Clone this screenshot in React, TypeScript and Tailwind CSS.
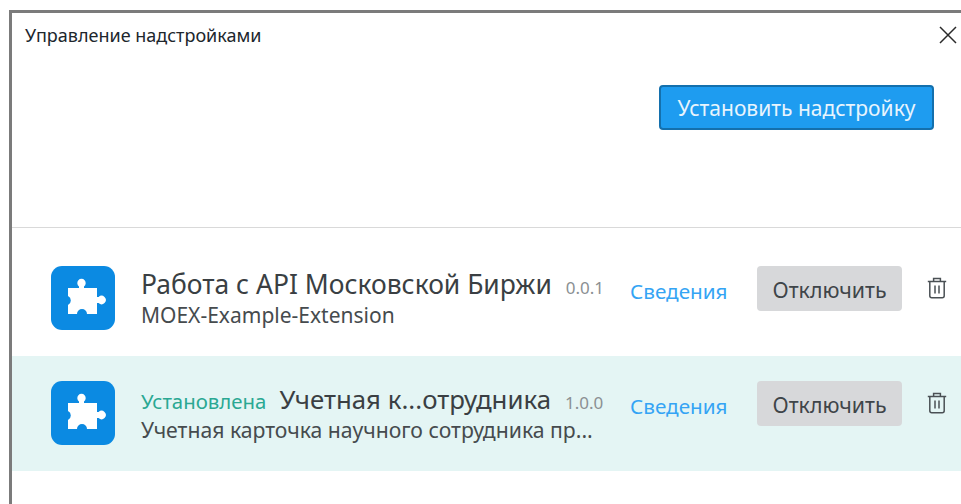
const font = "font-['Noto_Sans','Open_Sans',sans-serif]"

type Addon = { title: string; titleSize: string; version: string; subtitle: string; subtitleSize: string; installed?: boolean }

const addons: Addon[] = [
  { title: 'Работа с API Московской Биржи', titleSize: 'text-[26.45px]', version: '0.0.1', subtitle: 'MOEX-Example-Extension', subtitleSize: 'text-[21px]' },
  { title: 'Учетная к...отрудника', titleSize: 'text-[25.8px]', version: '1.0.0', subtitle: 'Учетная карточка научного сотрудника пр...', subtitleSize: 'text-[21.2px]', installed: true },
]

function PuzzleIcon() {
  return (
    <svg className="shrink-0" width="64" height="64" viewBox="0 0 64 64">
      <rect width="64" height="64" rx="11" fill="#0b8ae2" />
      <path
        fill="#fff"
        d="M17 22H28V20.4A4.2 4.2 0 1 1 33 20.4V22H46V31H47.6A4.2 4.2 0 1 1 47.6 37H46V48H36A5 5 0 0 0 26 48H17V39A5 5 0 0 0 17 30Z"
      />
    </svg>
  )
}

function TrashIcon() {
  return (
    <svg width="20" height="22" viewBox="0 0 20 22" fill="none" stroke="#4a5054" strokeWidth="1.5">
      <path d="M.8 4.4h18.4M6.6 4.4V1.6h6.8v2.8M2.8 4.4v14.4c0 1.2.8 2 2 2h10.4c1.2 0 2-.8 2-2V4.4M8 8.6v7.8M12 8.6v7.8" />
    </svg>
  )
}

function AddonRow({ addon }: { addon: Addon }) {
  return (
    <div className={`h-[115px] flex items-start pl-[39px] pt-[25px] ${addon.installed ? 'bg-[#e4f5f4]' : ''}`}>
      <PuzzleIcon />
      <div className="w-[515px] pl-[26px] shrink-0">
        <div className="flex items-baseline whitespace-nowrap">
          {addon.installed && <span className="text-[20.4px] text-[#2aa893] mr-[13px]">Установлена</span>}
          <span className={`${addon.titleSize} leading-[36px] text-[#3a3f43]`}>{addon.title}</span>
          <span className="text-[17px] text-[#8b9093] ml-[14px]">{addon.version}</span>
        </div>
        <div className={`${addon.subtitleSize} leading-[28px] text-[#464b4e] whitespace-nowrap -mt-[1px]`}>{addon.subtitle}</div>
      </div>
      <a className="text-[20.7px] leading-[28px] mt-[11px] text-[#34a4f4] whitespace-nowrap w-[127px] shrink-0">Сведения</a>
      <button className="w-[145px] h-[45px] shrink-0 rounded-[4px] bg-[#d7d8da] text-[21.3px] pt-[3px] text-[#3f4549]">Отключить</button>
      <div className="ml-[25px] shrink-0 mt-[11px]"><TrashIcon /></div>
    </div>
  )
}

export default function App() {
  return (
    <div className={`h-[504px] w-[961px] overflow-hidden bg-white pt-[10px] pl-[9px] ${font}`}>
      <div className="h-[494px] border-t-[3px] border-l-[3px] border-[#7b7b7b]">
        <div className="flex justify-between h-[44px] pl-[13px] pr-[3px]">
          <span className="text-[18px] leading-[24px] mt-[10px] text-[#20262c]">Управление надстройками</span>
          <svg className="mt-[12px]" width="20" height="20" viewBox="0 0 20 20" stroke="#2a2a2a" strokeWidth="1.5">
            <path d="M2 2l16 16M18 2L2 18" />
          </svg>
        </div>
        <div className="flex justify-end h-[171px] pr-[27px] pt-[28px] border-b border-[#d9d9d9] items-start">
          <button className="w-[275px] h-[45px] rounded-[4px] bg-[#1e9cf0] border-2 border-[#1470ad] text-[21px] pt-[2px] text-[#e8f4fd]">Установить надстройку</button>
        </div>
        <div className="pt-[13px]">
          {addons.map(a => <AddonRow key={a.title} addon={a} />)}
        </div>
      </div>
    </div>
  )
}
